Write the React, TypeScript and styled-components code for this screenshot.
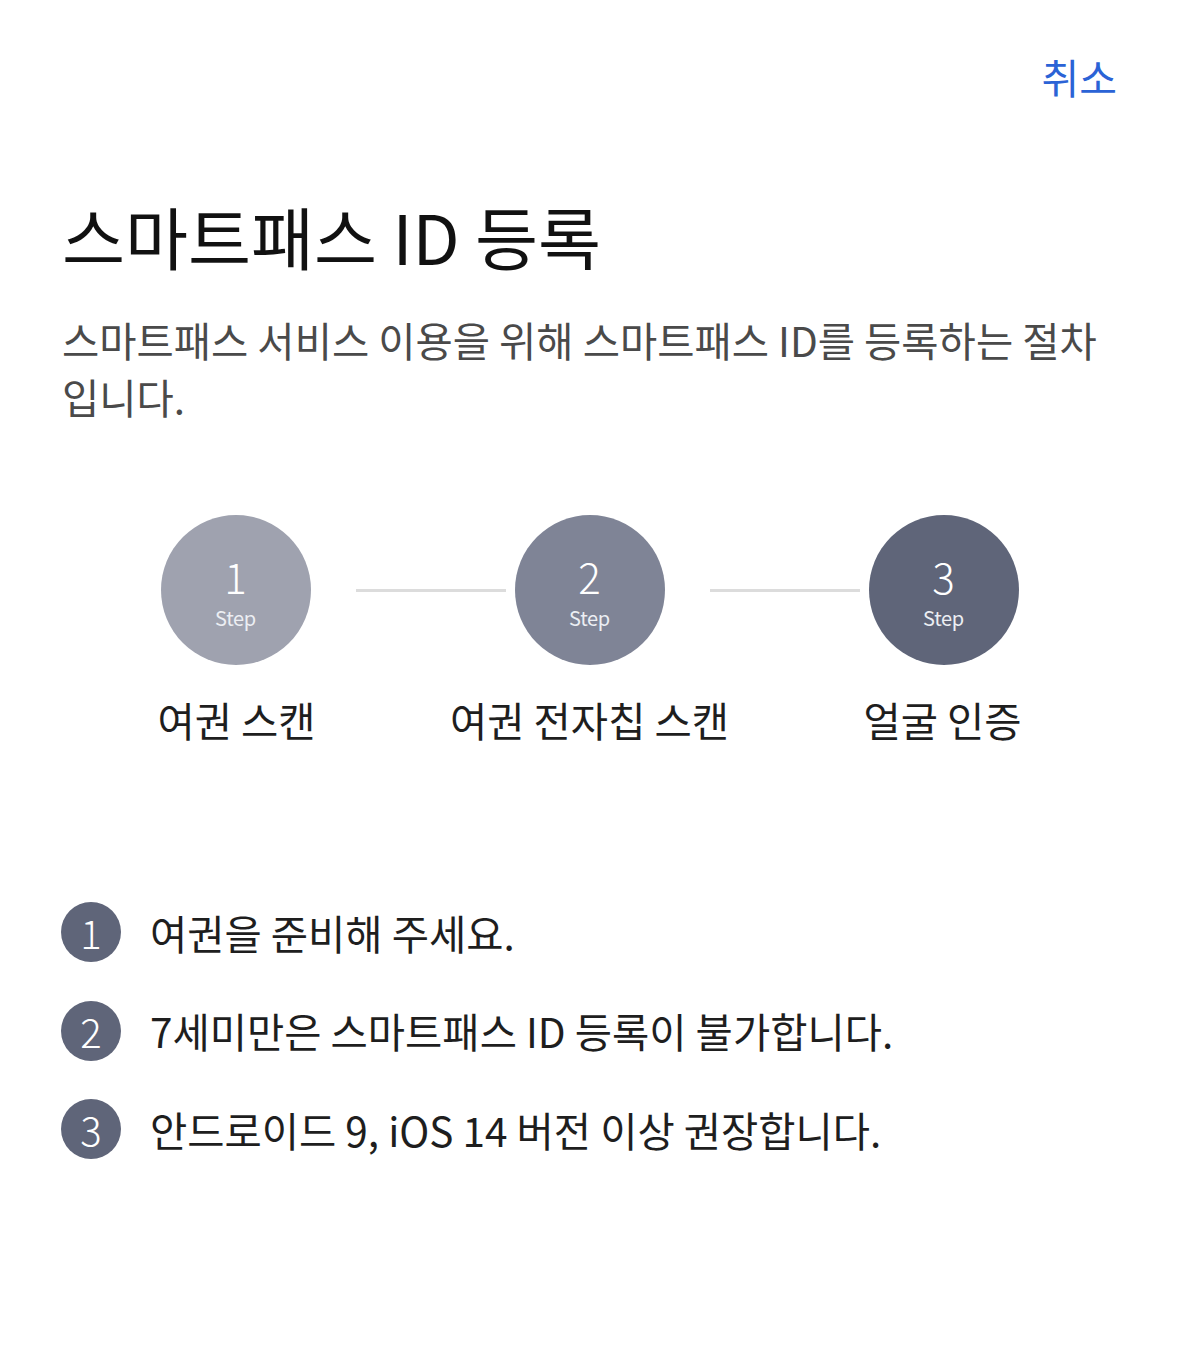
import React from 'react';
import styled, { createGlobalStyle } from 'styled-components';

const GlobalStyle = createGlobalStyle`
  html, body {
    margin: 0;
    padding: 0;
    background: #ffffff;
  }
  body {
    font-family: "Noto Sans CJK KR", "Noto Sans", sans-serif;
    color: #1a1a1a;
  }
`;

const Page = styled.div`
  display: flex;
  flex-direction: column;
  padding: 46px 62px 120px;
`;

const Header = styled.div`
  display: flex;
  justify-content: flex-end;
`;

const CancelButton = styled.button`
  border: none;
  background: none;
  padding: 0;
  font-family: inherit;
  font-size: 41px;
  line-height: 60px;
  color: #2b63d6;
  cursor: pointer;
`;

const Title = styled.h1`
  margin: 88px 0 0;
  font-size: 68.5px;
  font-weight: 400;
  line-height: 83px;
  color: #111111;
`;

const Description = styled.p`
  margin: 34px 0 0;
  font-size: 40.5px;
  line-height: 57px;
  color: #4a4a4a;
  word-break: keep-all;
`;

const StepTrack = styled.div`
  display: flex;
  justify-content: center;
  align-items: center;
  margin-top: 90px;
`;

const StepCircle = styled.div<{ $tone: string }>`
  display: flex;
  flex-direction: column;
  align-items: center;
  box-sizing: border-box;
  width: 150px;
  height: 150px;
  padding-top: 38px;
  border-radius: 50%;
  background: ${(p) => p.$tone};
  color: #ffffff;
`;

const StepNumber = styled.span`
  font-size: 42px;
  line-height: 46px;
  font-weight: 300;
`;

const StepWord = styled.span`
  font-size: 20px;
  line-height: 24px;
  margin-top: 7px;
  color: #eceef3;
  letter-spacing: -0.3px;
`;

const Connector = styled.div`
  width: 150px;
  height: 3px;
  margin: 0 9px 0 45px;
  background: #dcdcdc;
`;

const StepLabels = styled.div`
  display: grid;
  grid-template-columns: repeat(3, 353px);
  justify-content: center;
  margin-top: 26px;
`;

const StepLabel = styled.div`
  text-align: center;
  font-size: 40.5px;
  line-height: 57px;
  color: #1e1e1e;
`;

const NoticeList = styled.ol`
  list-style: none;
  margin: 154px 0 0;
  padding: 0;
  display: flex;
  flex-direction: column;
  gap: 38.5px;
`;

const NoticeItem = styled.li`
  display: flex;
  align-items: center;
  gap: 29px;
  height: 60px;
`;

const NoticeBadge = styled.span`
  display: flex;
  align-items: center;
  justify-content: center;
  flex-shrink: 0;
  width: 60px;
  height: 60px;
  margin-left: -1px;
  border-radius: 50%;
  background: #5f6579;
  color: #ffffff;
  font-size: 40px;
  font-weight: 300;
`;

const NoticeText = styled.span`
  font-size: 40.5px;
  line-height: 57px;
  color: #1e1e1e;
`;

const steps = [
  { label: '여권 스캔', tone: '#9fa2af' },
  { label: '여권 전자칩 스캔', tone: '#7f8496' },
  { label: '얼굴 인증', tone: '#5f6579' },
];

const notices = [
  '여권을 준비해 주세요.',
  '7세미만은 스마트패스 ID 등록이 불가합니다.',
  '안드로이드 9, iOS 14 버전 이상 권장합니다.',
];

export default function App() {
  return (
    <>
      <GlobalStyle />
      <Page>
        <Header>
          <CancelButton type="button">취소</CancelButton>
        </Header>
        <Title>스마트패스 ID 등록</Title>
        <Description>
          스마트패스 서비스 이용을 위해 스마트패스 ID를 등록하는 절차 입니다.
        </Description>

        <StepTrack>
          {steps.map((s, i) => (
            <React.Fragment key={s.label}>
              <StepCircle $tone={s.tone}>
                <StepNumber>{i + 1}</StepNumber>
                <StepWord>Step</StepWord>
              </StepCircle>
              {i < steps.length - 1 && <Connector />}
            </React.Fragment>
          ))}
        </StepTrack>
        <StepLabels>
          {steps.map((s) => (
            <StepLabel key={s.label}>{s.label}</StepLabel>
          ))}
        </StepLabels>

        <NoticeList>
          {notices.map((n, i) => (
            <NoticeItem key={n}>
              <NoticeBadge>{i + 1}</NoticeBadge>
              <NoticeText>{n}</NoticeText>
            </NoticeItem>
          ))}
        </NoticeList>
      </Page>
    </>
  );
}
